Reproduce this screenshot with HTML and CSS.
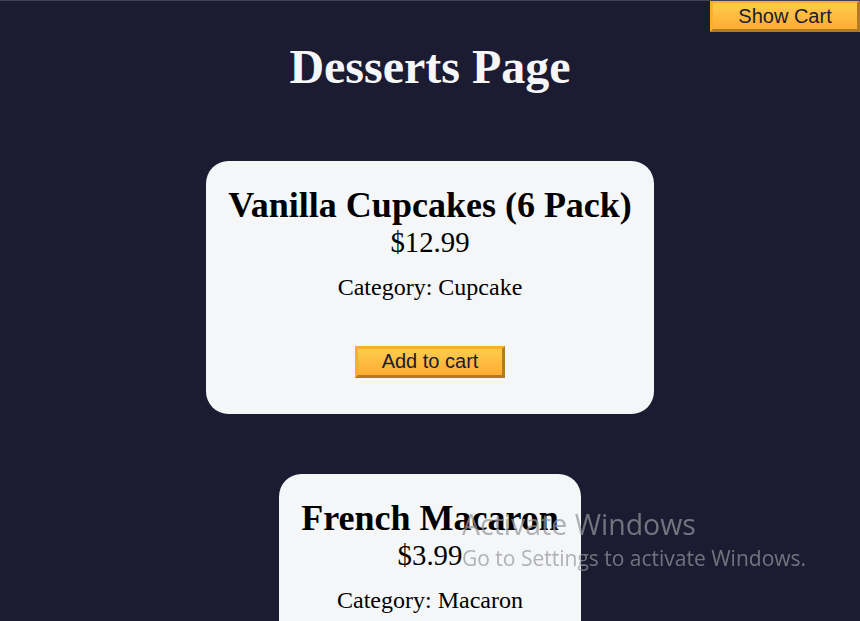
FILE: index.html
```html
<!DOCTYPE html>
<html lang="en">
<head>
<meta charset="utf-8">
<title>Desserts Page</title>
<link rel="stylesheet" href="styles.css">
</head>
<body>
<div class="top-line"></div>
<header>
  <h1 class="title">Desserts Page</h1>
</header>
<main>
  <button id="cart-btn" class="btn">Show Cart</button>
  <div id="products-container">
    <div class="dessert-card">
      <h2>Vanilla Cupcakes (6 Pack)</h2>
      <p class="dessert-price">$12.99</p>
      <p class="product-category">Category: Cupcake</p>
      <button class="btn add-to-cart-btn">Add to cart</button>
    </div>
    <div class="dessert-card">
      <h2>French Macaron</h2>
      <p class="dessert-price">$3.99</p>
      <p class="product-category">Category: Macaron</p>
      <button class="btn add-to-cart-btn">Add to cart</button>
    </div>
    <div class="dessert-card">
      <h2>Pumpkin Cupcake</h2>
      <p class="dessert-price">$3.99</p>
      <p class="product-category">Category: Cupcake</p>
      <button class="btn add-to-cart-btn">Add to cart</button>
    </div>
  </div>
</main>
<div class="activate">
  <div class="activate-title">Activate Windows</div>
  <div class="activate-sub">Go to Settings to activate Windows.</div>
</div>
</body>
</html>
```
FILE: styles.css
```css
html {
  scrollbar-width: none;
}
html::-webkit-scrollbar {
  display: none;
}
body {
  margin: 12px;
  background-color: #1b1b32;
  font-family: "Liberation Serif", "Times New Roman", serif;
}
.top-line {
  position: fixed;
  top: 0;
  left: 0;
  right: 0;
  height: 1px;
  background: #3f3f55;
  z-index: 10;
}
.title {
  color: #f5f6f7;
  text-align: center;
  font-size: 48px;
  font-weight: bold;
  margin: 26.5px 0 37.5px;
}
#products-container {
  display: flex;
  flex-direction: column;
  align-items: center;
}
.dessert-card {
  background-color: #f5f6f7;
  padding: 22.5px;
  text-align: center;
  border-radius: 22.5px;
  margin: 30px;
}
.dessert-card h2 {
  font-size: 36px;
  margin: 0;
  color: #000;
}
.dessert-price {
  font-size: 28.8px;
  margin: 0;
}
.product-category {
  font-size: 24px;
  margin: 15px 0;
}
.btn {
  display: block;
  box-sizing: border-box;
  width: 150px;
  height: 32px;
  padding: 1.5px 9px;
  font-family: "Liberation Sans", Arial, sans-serif;
  font-size: 20px;
  color: #1b1b32;
  background-color: #feac32;
  background-image: linear-gradient(#fecc4c, #ffac33);
  border-width: 3px;
  border-style: solid;
  border-color: #feac32 #b37a24 #b37a24 #feac32;
  cursor: pointer;
}
.add-to-cart-btn {
  margin: 45px auto 14px;
}
#cart-btn {
  position: absolute;
  top: 0;
  right: 0;
}
.activate {
  position: fixed;
  left: 462px;
  top: 504px;
  font-family: "Open Sans", "Noto Sans", sans-serif;
  color: rgba(150, 150, 155, 0.72);
  pointer-events: none;
}
.activate-title {
  font-size: 28.5px;
  line-height: 41px;
}
.activate-sub {
  font-size: 21px;
  line-height: 26px;
}
```
